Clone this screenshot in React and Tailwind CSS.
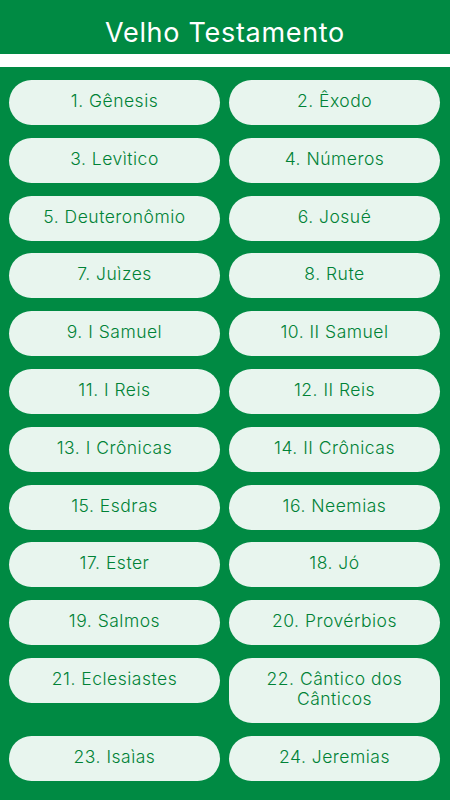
import React from "react";

const books = [
  "1. Gênesis", "2. Êxodo", "3. Levìtico", "4. Números", "5. Deuteronômio", "6. Josué",
  "7. Juìzes", "8. Rute", "9. I Samuel", "10. II Samuel", "11. I Reis", "12. II Reis",
  "13. I Crônicas", "14. II Crônicas", "15. Esdras", "16. Neemias", "17. Ester", "18. Jó",
  "19. Salmos", "20. Provérbios", "21. Eclesiastes", "22. Cântico dos Cânticos",
  "23. Isaìas", "24. Jeremias",
];

export default function App() {
  return (
    <div className="w-[450px] h-[800px] overflow-hidden bg-[#008a43]" style={{ fontFamily: "Inter, 'Noto Sans', sans-serif" }}>
      <div className="h-[54px] flex items-center justify-center">
        <h1 className="text-white text-[27px] leading-none tracking-[0.7px] pt-[10px]">Velho Testamento</h1>
      </div>
      <div className="h-[13px] bg-white" />
      <div className="grid grid-cols-2 gap-x-[9px] gap-y-[12.8px] px-[9px] pr-[10px] pt-[13px] items-start">
        {books.map((b) => (
          <div
            key={b}
            className="min-h-[45px] rounded-[23px] bg-[#e8f5ee] text-[#008236] text-[17.5px] font-[350] leading-[20px] flex items-center justify-center text-center px-8 pt-[11px] pb-[14px] tracking-[0.5px]"
          >
            {b}
          </div>
        ))}
      </div>
    </div>
  );
}
